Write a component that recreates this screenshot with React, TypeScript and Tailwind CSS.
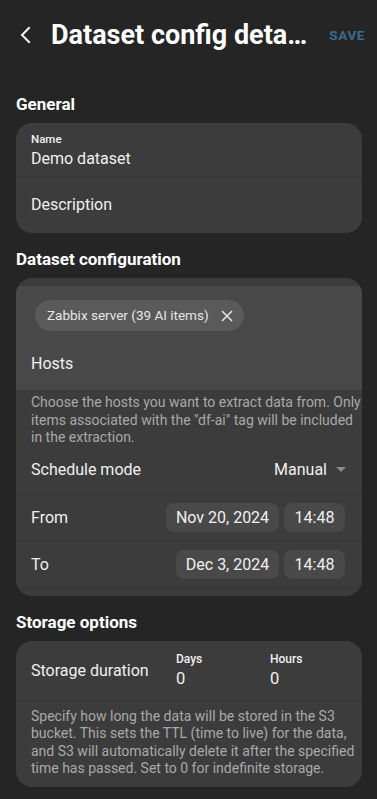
import React from "react";

const font = { fontFamily: "Roboto, 'Noto Sans', sans-serif" };

function DateBtn({ children, w }: { children: React.ReactNode; w: string }) {
  return (
    <div className={`h-[29px] ${w} rounded-lg bg-[#494949] flex items-center justify-center text-[16px] text-[#f0f0f0]`}>
      {children}
    </div>
  );
}

export default function App() {
  return (
    <div style={font} className="w-[377px] min-h-[799px] bg-[#252525] text-white pl-4 pr-[15px]">
      {/* Header */}
      <div className="h-[70px] flex items-center">
        <svg width="16" height="20" viewBox="0 0 16 20" className="ml-[2px] mr-[17px] shrink-0">
          <path d="M11 3 L4 10 L11 17" stroke="#f2f2f2" strokeWidth="2" fill="none" strokeLinecap="square" />
        </svg>
        <div className="text-[27px] font-bold whitespace-nowrap overflow-hidden text-ellipsis w-[262px] shrink-0">
          Dataset config details
        </div>
        <div className="ml-auto mr-[-3px] text-[13.5px] font-bold text-[#3b6a90] tracking-[0.6px]">SAVE</div>
      </div>

      {/* General */}
      <div className="text-[17px] font-bold mt-[20px] leading-[28px]">General</div>
      <div className="mt-[5px] rounded-[16px] bg-[#3c3c3c]">
        <div className="h-[54px] px-[15px] pt-[9px] border-b border-[#353535]">
          <div className="text-[11.5px] font-medium text-[#f0f0f0] leading-[14px]">Name</div>
          <div className="text-[16px] text-[#f0f0f0] leading-[22px] mt-[2px]">Demo dataset</div>
        </div>
        <div className="h-[56px] px-[15px] flex items-center text-[16px] text-[#f0f0f0]">Description</div>
      </div>

      {/* Dataset configuration */}
      <div className="text-[17px] font-bold mt-[12px] leading-[28px]">Dataset configuration</div>
      <div className="mt-[5px] rounded-[16px] bg-[#3c3c3c] pt-[8px] pb-[7px] overflow-hidden">
        <div className="bg-[#484848] h-[104px] pt-[14px] px-[19px]">
          <div className="inline-flex items-center h-[31px] rounded-full bg-[#5a5a5a] pl-[12px] pr-[11px] text-[13.5px] text-[#e6e6e6]">
            Zabbix server (39 AI items)
            <svg width="12" height="12" viewBox="0 0 12 12" className="ml-[12px]">
              <path d="M1 1 L11 11 M11 1 L1 11" stroke="#e6e6e6" strokeWidth="1.5" />
            </svg>
          </div>
          <div className="text-[16px] text-[#f0f0f0] mt-[21px] ml-[-4px]">Hosts</div>
        </div>
        <div className="pl-[15px] pr-[1px] pt-[4px] text-[14px] leading-[17.5px] text-[#a9a9a9]">
          Choose the hosts you want to extract data from. Only items associated with the "df-ai" tag will be included in the extraction.
        </div>
        <div className="h-[48px] px-[15px] flex items-center border-b border-[#353535]">
          <div className="text-[16px] text-[#f0f0f0]">Schedule mode</div>
          <div className="ml-auto flex items-center text-[16px] text-[#f0f0f0]">
            Manual
            <svg width="10" height="6" viewBox="0 0 10 6" className="ml-[9px] mr-[1px]">
              <path d="M0 0 L10 0 L5 5 Z" fill="#8a8a8a" />
            </svg>
          </div>
        </div>
        <div className="h-[47px] pl-[15px] pr-[17px] flex items-center gap-[5px] border-b border-[#353535]">
          <div className="text-[16px] text-[#f0f0f0] mr-auto">From</div>
          <DateBtn w="w-[113px]">Nov 20, 2024</DateBtn>
          <DateBtn w="w-[61px]">14:48</DateBtn>
        </div>
        <div className="h-[47px] pl-[15px] pr-[17px] flex items-center gap-[5px] border-b border-[#353535]">
          <div className="text-[16px] text-[#f0f0f0] mr-auto">To</div>
          <DateBtn w="w-[103px]">Dec 3, 2024</DateBtn>
          <DateBtn w="w-[61px]">14:48</DateBtn>
        </div>
      </div>

      {/* Storage options */}
      <div className="text-[17px] font-bold mt-[12px] leading-[28px]">Storage options</div>
      <div className="mt-[5px] rounded-[16px] bg-[#3c3c3c] pb-[9px]">
        <div className="h-[61px] px-[15px] flex items-center border-b border-[#353535]">
          <div className="text-[16px] text-[#f0f0f0] w-[145px]">Storage duration</div>
          <div className="w-[94px]">
            <div className="text-[12px] font-medium text-[#f0f0f0] leading-[14px]">Days</div>
            <div className="text-[16.5px] text-[#f0f0f0] leading-[22px] mt-[2px]">0</div>
          </div>
          <div>
            <div className="text-[12px] font-medium text-[#f0f0f0] leading-[14px]">Hours</div>
            <div className="text-[16.5px] text-[#f0f0f0] leading-[22px] mt-[2px]">0</div>
          </div>
        </div>
        <div className="pl-[15px] pr-[1px] pt-[6px] text-[14px] leading-[17.5px] text-[#a9a9a9]">
          Specify how long the data will be stored in the S3 bucket. This sets the TTL (time to live) for the data, and S3 will automatically delete it after the specified time has passed. Set to 0 for indefinite storage.
        </div>
      </div>
    </div>
  );
}
